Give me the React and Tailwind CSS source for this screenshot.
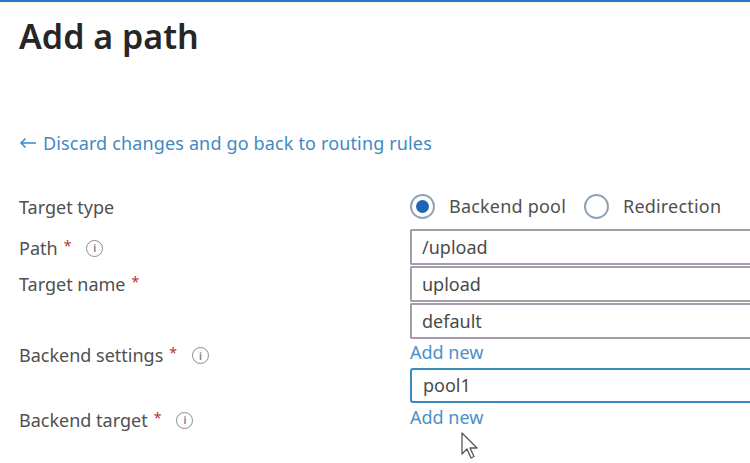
import { useState } from 'react'

const Star = () => <span className="ml-[6px] text-[#b8323a] text-[14px] relative -top-[3px]">*</span>

const Info = ({ ml = 'ml-[15px]' }) => (
  <span className={`${ml} inline-flex items-center justify-center w-[17px] h-[17px] rounded-full border-[1.5px] border-[#8a8a8a] text-[10px] leading-none text-[#8a8a8a] font-bold`}>
    i
  </span>
)

const Label = ({ children, className = '' }) => (
  <div className={`w-[391px] shrink-0 flex items-center text-[18px] text-[#505050] ${className}`}>{children}</div>
)

const Box = ({ value, className = '' }) => (
  <div className={`flex-1 h-[36px] border-2 border-r-0 border-[#a79cab] rounded-l-[2px] flex items-center pl-[10px] text-[18px] text-[#4a4a4a] ${className}`}>
    {value}
  </div>
)

const Radio = ({ checked, label }) => (
  <label className="flex items-center gap-[14px] cursor-pointer">
    <span className="w-[25px] h-[25px] rounded-full border-2 border-[#8fa3b8] flex items-center justify-center bg-white">
      {checked && <span className="w-[13px] h-[13px] rounded-full bg-[#1f65b5]" />}
    </span>
    <span className="text-[18px] tracking-[0.2px] text-[#505050]">{label}</span>
  </label>
)

export default function App() {
  const [target, setTarget] = useState('pool')
  return (
    <div className="relative w-[750px] h-[463px] overflow-hidden bg-white" style={{ fontFamily: '"Noto Sans", "Open Sans", sans-serif' }}>
      <div className="h-[2px] bg-[#2b77c6]" />
      <div className="h-[2px] bg-[#fbf6e8]" />

      <div className="pl-[19px]">
        <h1 className="mt-[10px] text-[34px] leading-[44px] font-semibold text-[#262626]">Add a path</h1>

        <a className="mt-[74px] flex items-center gap-[6px] text-[18px] leading-[22px] tracking-[0.15px] text-[#3f89c5] cursor-pointer">
          <svg width="18" height="12" viewBox="0 0 18 12" fill="none" stroke="#3f89c5" strokeWidth="1.5">
            <path d="M17 6 H2 M6.5 1.5 L2 6 L6.5 10.5" />
          </svg>
          Discard changes and go back to routing rules
        </a>

        <div className="mt-[36px] flex flex-col">
          {/* Target type */}
          <div className="flex h-[32px]">
            <Label className="pt-[2px]">Target type</Label>
            <div className="flex items-center gap-[18px]" onClick={() => setTarget(target === 'pool' ? 'redirect' : 'pool')}>
              <Radio checked={target === 'pool'} label="Backend pool" />
              <Radio checked={target === 'redirect'} label="Redirection" />
            </div>
          </div>

          {/* Path */}
          <div className="flex mt-[7px]">
            <Label className="pt-[2px]">Path<Star /><Info /></Label>
            <Box value="/upload" />
          </div>

          {/* Target name */}
          <div className="flex mt-[1px]">
            <Label>Target name<Star /></Label>
            <Box value="upload" />
          </div>

          <div className="flex mt-[1px]">
            <Label />
            <Box value="default" />
          </div>

          {/* Backend settings */}
          <div className="flex h-[29px]">
            <Label className="pt-[4px]">Backend settings<Star /><Info /></Label>
            <a className="text-[18px] text-[#4a90c8] leading-[26px]">Add new</a>
          </div>

          <div className="flex">
            <Label />
            <div className="flex-1 h-[35px] border-2 border-r-0 border-[#3a8bbd] rounded-l-[3px] flex items-center pl-[11px] text-[18px] text-[#4a4a4a]">
              pool1
            </div>
          </div>

          {/* Backend target */}
          <div className="flex h-[28px]">
            <Label className="pt-[6px]">Backend target<Star /><Info /></Label>
            <a className="text-[18px] text-[#4a90c8] leading-[28px]">Add new</a>
          </div>
        </div>
      </div>

      {/* mouse pointer */}
      <svg className="absolute left-[460px] top-[432px]" width="20" height="28" viewBox="0 0 20 28">
        <path d="M2 1 L2 22 L7 17 L11 26 L14 24.5 L10 16 L17 16 Z" fill="white" stroke="#555" strokeWidth="1.3" strokeLinejoin="round" />
      </svg>
    </div>
  )
}
